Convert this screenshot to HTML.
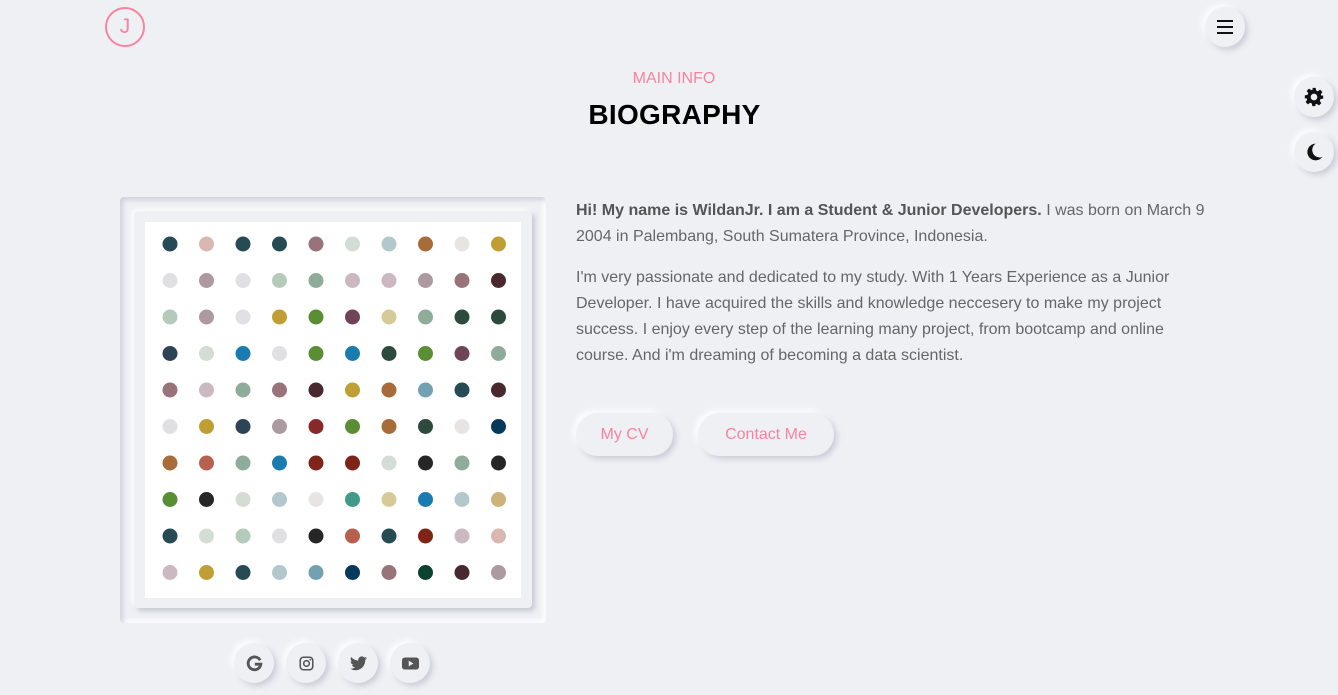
<!DOCTYPE html>
<html><head><meta charset="utf-8"><style>
*{margin:0;padding:0;box-sizing:border-box}
body{width:1338px;height:695px;background:#eef0f4;font-family:"Liberation Sans",sans-serif;position:relative;overflow:hidden;color:#666}
.nb{position:absolute;border-radius:50%;background:#eef0f4;box-shadow:3px 3px 6px rgba(160,165,180,.45),-3px -3px 6px rgba(255,255,255,.9);display:flex;align-items:center;justify-content:center}
.logo{position:absolute;left:105px;top:7px;width:40px;height:40px;border:2px solid #f7849e;border-radius:50%;color:#f7849e;font-size:21px;text-align:center;line-height:35px}
.sub{position:absolute;top:70px;left:0;width:1348px;text-align:center;color:#f7849e;font-size:16px}
.h1{position:absolute;top:99px;left:0;width:1349px;text-align:center;color:#000;font-size:28px;font-weight:bold;letter-spacing:.3px}
.outer{position:absolute;left:120px;top:197px;width:426px;height:426px;border-radius:4px;box-shadow:inset 3px 3px 5px rgba(170,175,190,.45),inset -3px -3px 5px rgba(255,255,255,.9)}
.inner{position:absolute;left:134px;top:211px;width:398px;height:397px;border-radius:4px;background:#eef0f4;box-shadow:3px 3px 5px rgba(160,165,180,.5),-2px -2px 4px rgba(255,255,255,.9)}
.white{position:absolute;left:145px;top:222px;width:376px;height:376px;background:#fff}
.txt{position:absolute;left:576px;top:198px;font-size:16px;line-height:26px;white-space:nowrap;color:#666}
.txt b{color:#555}
.btn{position:absolute;top:413px;height:43px;border-radius:22px;background:#eef0f4;box-shadow:3px 3px 6px rgba(160,165,180,.45),-3px -3px 6px rgba(255,255,255,.9);color:#f7849e;font-size:16px;display:flex;align-items:center;justify-content:center}
</style></head><body>
<div class="logo">J</div>
<div class="nb" style="left:1205px;top:7px;width:40px;height:40px"><svg width="18" height="16" viewBox="0 0 18 16"><rect x="1" y="1" width="16" height="2" fill="#111"/><rect x="1" y="7" width="16" height="2" fill="#111"/><rect x="1" y="13" width="16" height="2" fill="#111"/></svg></div>
<div class="nb" style="left:1294px;top:77px;width:40px;height:40px"><svg width="20" height="20" viewBox="0 0 24 24"><path fill="#111" d="M10 1h4l.6 3.2 2 .9 2.7-1.9 2.8 2.8-1.9 2.7.9 2L23 10v4l-3.2.6-.9 2 1.9 2.7-2.8 2.8-2.7-1.9-2 .9L14 23h-4l-.6-3.2-2-.9-2.7 1.9-2.8-2.8 1.9-2.7-.9-2L1 14v-4l3.2-.6.9-2L3.2 4.7 6 1.9l2.7 1.9 2-.9z M12 8a4 4 0 1 0 0 8a4 4 0 1 0 0-8z" fill-rule="evenodd"/></svg></div>
<div class="nb" style="left:1294px;top:132px;width:40px;height:40px"><svg width="20" height="20" viewBox="0 0 24 24"><path fill="#111" d="M14 2A10 10 0 1 0 22 18A9 9 0 0 1 14 2z"/></svg></div>
<div class="sub">MAIN INFO</div>
<div class="h1">BIOGRAPHY</div>
<div class="outer"></div><div class="inner"></div>
<div class="white"><svg width="376" height="376">
<g transform="translate(0,22)"><circle cx="25" r="7.5" fill="#274b55"/><circle cx="61.5" r="7.5" fill="#d8b8b0"/><circle cx="98" r="7.5" fill="#274b55"/><circle cx="134.5" r="7.5" fill="#274b55"/><circle cx="171" r="7.5" fill="#98737a"/><circle cx="207.5" r="7.5" fill="#d3ddd5"/><circle cx="244" r="7.5" fill="#b2c8cc"/><circle cx="280.5" r="7.5" fill="#a86b3a"/><circle cx="317" r="7.5" fill="#e6e5e3"/><circle cx="353.5" r="7.5" fill="#bf9f34"/></g>
<g transform="translate(0,58.5)"><circle cx="25" r="7.5" fill="#e0dfe1"/><circle cx="61.5" r="7.5" fill="#ad9aa0"/><circle cx="98" r="7.5" fill="#e0dfe1"/><circle cx="134.5" r="7.5" fill="#b4cbbc"/><circle cx="171" r="7.5" fill="#8fac9b"/><circle cx="207.5" r="7.5" fill="#cbb8c0"/><circle cx="244" r="7.5" fill="#cbb8c0"/><circle cx="280.5" r="7.5" fill="#ad9aa0"/><circle cx="317" r="7.5" fill="#98737a"/><circle cx="353.5" r="7.5" fill="#4a2830"/></g>
<g transform="translate(0,95)"><circle cx="25" r="7.5" fill="#b4cbbc"/><circle cx="61.5" r="7.5" fill="#ad9aa0"/><circle cx="98" r="7.5" fill="#e0e0e5"/><circle cx="134.5" r="7.5" fill="#bf9f34"/><circle cx="171" r="7.5" fill="#5a8e35"/><circle cx="207.5" r="7.5" fill="#6f4358"/><circle cx="244" r="7.5" fill="#d6cb98"/><circle cx="280.5" r="7.5" fill="#8fac9b"/><circle cx="317" r="7.5" fill="#2c4b3c"/><circle cx="353.5" r="7.5" fill="#2c4b3c"/></g>
<g transform="translate(0,131.5)"><circle cx="25" r="7.5" fill="#2e4356"/><circle cx="61.5" r="7.5" fill="#d3ddd5"/><circle cx="98" r="7.5" fill="#1a7bb0"/><circle cx="134.5" r="7.5" fill="#e0dfe1"/><circle cx="171" r="7.5" fill="#5a8e35"/><circle cx="207.5" r="7.5" fill="#1a7bb0"/><circle cx="244" r="7.5" fill="#2c4b3c"/><circle cx="280.5" r="7.5" fill="#5a8e35"/><circle cx="317" r="7.5" fill="#6f4358"/><circle cx="353.5" r="7.5" fill="#8fac9b"/></g>
<g transform="translate(0,168)"><circle cx="25" r="7.5" fill="#98737a"/><circle cx="61.5" r="7.5" fill="#cbb8c0"/><circle cx="98" r="7.5" fill="#8fac9b"/><circle cx="134.5" r="7.5" fill="#98737a"/><circle cx="171" r="7.5" fill="#4a2830"/><circle cx="207.5" r="7.5" fill="#bf9f34"/><circle cx="244" r="7.5" fill="#a86b3a"/><circle cx="280.5" r="7.5" fill="#72a2b2"/><circle cx="317" r="7.5" fill="#274b55"/><circle cx="353.5" r="7.5" fill="#4a2830"/></g>
<g transform="translate(0,204.5)"><circle cx="25" r="7.5" fill="#e0dfe1"/><circle cx="61.5" r="7.5" fill="#bf9f34"/><circle cx="98" r="7.5" fill="#2e4356"/><circle cx="134.5" r="7.5" fill="#ad9aa0"/><circle cx="171" r="7.5" fill="#87292b"/><circle cx="207.5" r="7.5" fill="#5a8e35"/><circle cx="244" r="7.5" fill="#a86b3a"/><circle cx="280.5" r="7.5" fill="#2c4b3c"/><circle cx="317" r="7.5" fill="#e6e5e3"/><circle cx="353.5" r="7.5" fill="#053a5a"/></g>
<g transform="translate(0,241)"><circle cx="25" r="7.5" fill="#a86b3a"/><circle cx="61.5" r="7.5" fill="#b86050"/><circle cx="98" r="7.5" fill="#8fac9b"/><circle cx="134.5" r="7.5" fill="#1a7bb0"/><circle cx="171" r="7.5" fill="#7e2419"/><circle cx="207.5" r="7.5" fill="#7e2419"/><circle cx="244" r="7.5" fill="#d3ddd5"/><circle cx="280.5" r="7.5" fill="#262626"/><circle cx="317" r="7.5" fill="#8fac9b"/><circle cx="353.5" r="7.5" fill="#262626"/></g>
<g transform="translate(0,277.5)"><circle cx="25" r="7.5" fill="#5a8e35"/><circle cx="61.5" r="7.5" fill="#262626"/><circle cx="98" r="7.5" fill="#d3ddd5"/><circle cx="134.5" r="7.5" fill="#b2c8cc"/><circle cx="171" r="7.5" fill="#e6e5e3"/><circle cx="207.5" r="7.5" fill="#3f9a8a"/><circle cx="244" r="7.5" fill="#d6cb98"/><circle cx="280.5" r="7.5" fill="#1a7bb0"/><circle cx="317" r="7.5" fill="#b2c8cc"/><circle cx="353.5" r="7.5" fill="#cdb27a"/></g>
<g transform="translate(0,314)"><circle cx="25" r="7.5" fill="#274b55"/><circle cx="61.5" r="7.5" fill="#d3ddd5"/><circle cx="98" r="7.5" fill="#b4cbbc"/><circle cx="134.5" r="7.5" fill="#e0dfe1"/><circle cx="171" r="7.5" fill="#262626"/><circle cx="207.5" r="7.5" fill="#b86050"/><circle cx="244" r="7.5" fill="#274b55"/><circle cx="280.5" r="7.5" fill="#7e2419"/><circle cx="317" r="7.5" fill="#cbb8c0"/><circle cx="353.5" r="7.5" fill="#d8b8b0"/></g>
<g transform="translate(0,350.5)"><circle cx="25" r="7.5" fill="#cbb8c0"/><circle cx="61.5" r="7.5" fill="#bf9f34"/><circle cx="98" r="7.5" fill="#274b55"/><circle cx="134.5" r="7.5" fill="#b2c8cc"/><circle cx="171" r="7.5" fill="#72a2b2"/><circle cx="207.5" r="7.5" fill="#053a5a"/><circle cx="244" r="7.5" fill="#98737a"/><circle cx="280.5" r="7.5" fill="#0b4230"/><circle cx="317" r="7.5" fill="#4a2830"/><circle cx="353.5" r="7.5" fill="#ad9aa0"/></g>
</svg></div>
<div class="nb" style="left:234px;top:643px;width:40px;height:40px"><svg width="17" height="17" viewBox="0 0 24 24"><path fill="none" stroke="#555" stroke-width="4" d="M20 7.5A9 9 0 1 0 21 13H12.5"/></svg></div>
<div class="nb" style="left:286px;top:643px;width:40px;height:40px"><svg width="15" height="15" viewBox="0 0 24 24"><rect x="2" y="2" width="20" height="20" rx="5" fill="none" stroke="#555" stroke-width="2.5"/><circle cx="12" cy="12" r="4.5" fill="none" stroke="#555" stroke-width="2.5"/><circle cx="18" cy="6" r="1.4" fill="#555"/></svg></div>
<div class="nb" style="left:338px;top:643px;width:40px;height:40px"><svg width="17" height="15" viewBox="0 0 24 20"><path fill="#555" d="M24 2.4a10 10 0 0 1-2.8.8 5 5 0 0 0 2.1-2.7 10 10 0 0 1-3.1 1.2A4.9 4.9 0 0 0 11.8 6 14 14 0 0 1 1.7.9a4.9 4.9 0 0 0 1.5 6.6 5 5 0 0 1-2.2-.6 4.9 4.9 0 0 0 3.9 4.9 5 5 0 0 1-2.2.1 4.9 4.9 0 0 0 4.6 3.4A9.9 9.9 0 0 1 0 17.3 14 14 0 0 0 7.5 19.5c9.1 0 14-7.5 14-14v-.6A10 10 0 0 0 24 2.4z"/></svg></div>
<div class="nb" style="left:390px;top:643px;width:40px;height:40px"><svg width="17" height="13" viewBox="0 0 24 17"><rect x="0" y="0" width="24" height="17" rx="4" fill="#555"/><path d="M9.5 4.5v8l6.5-4z" fill="#eef0f4"/></svg></div>
<div class="txt"><b>Hi! My name is WildanJr. I am a Student &amp; Junior Developers.</b> I was born on March 9<br>2004 in Palembang, South Sumatera Province, Indonesia.
<div style="height:15px"></div>
I'm very passionate and dedicated to my study. With 1 Years Experience as a Junior<br>Developer. I have acquired the skills and knowledge neccesery to make my project<br>success. I enjoy every step of the learning many project, from bootcamp and online<br>course. And i'm dreaming of becoming a data scientist.</div>
<div class="btn" style="left:576px;width:97px">My CV</div>
<div class="btn" style="left:698px;width:136px">Contact Me</div>
</body></html>
